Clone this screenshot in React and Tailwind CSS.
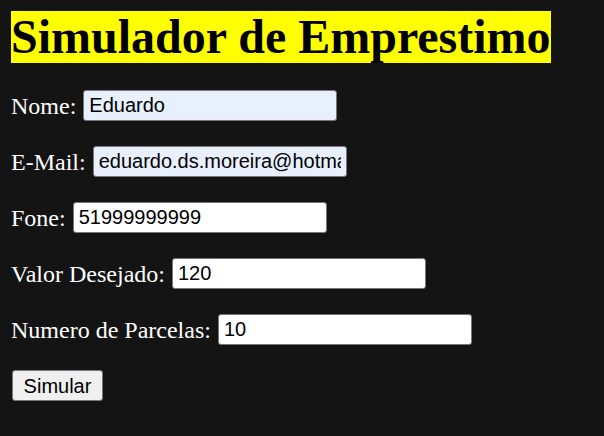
import { useState } from 'react';

const fields = [
  { id: 'nome', label: 'Nome:', value: 'Eduardo', autofill: true },
  { id: 'email', label: 'E-Mail:', value: 'eduardo.ds.moreira@hotmail.com', autofill: true },
  { id: 'fone', label: 'Fone:', value: '51999999999' },
  { id: 'valor', label: 'Valor Desejado:', value: '120' },
  { id: 'parcelas', label: 'Numero de Parcelas:', value: '10' },
];

export default function App() {
  const [form, setForm] = useState(Object.fromEntries(fields.map(f => [f.id, f.value])));

  return (
    <div className="min-h-[436px] bg-[#141414] pt-[11px] px-[11px] font-['Liberation_Serif',serif] text-white">
      <h1 className="inline-block h-[52px] leading-[52px] bg-[#ffff00] text-black text-[48px] font-bold">
        Simulador de Emprestimo
      </h1>

      <div className="mt-[27px] flex flex-col gap-[25px]">
        {fields.map(f => (
          <div key={f.id} className="flex items-center h-[31px] gap-[7px]">
            <label htmlFor={f.id} className="text-[24px] leading-none">{f.label}</label>
            <input
              id={f.id}
              value={form[f.id]}
              onChange={e => setForm(s => ({ ...s, [f.id]: e.target.value }))}
              className={`w-[254px] h-[31px] px-[5px] border border-[#767676] rounded-[3px] text-black text-[20px] font-['Liberation_Sans',Arial,sans-serif] outline-none ${f.autofill ? 'bg-[#e8f0fe]' : 'bg-white'}`}
            />
          </div>
        ))}

        <div>
          <button className="w-[91px] h-[31px] ml-[1px] bg-[#efefef] border border-[#767676] rounded-[3px] text-black text-[20px] font-['Liberation_Sans',Arial,sans-serif]">
            Simular
          </button>
        </div>
      </div>
    </div>
  );
}
